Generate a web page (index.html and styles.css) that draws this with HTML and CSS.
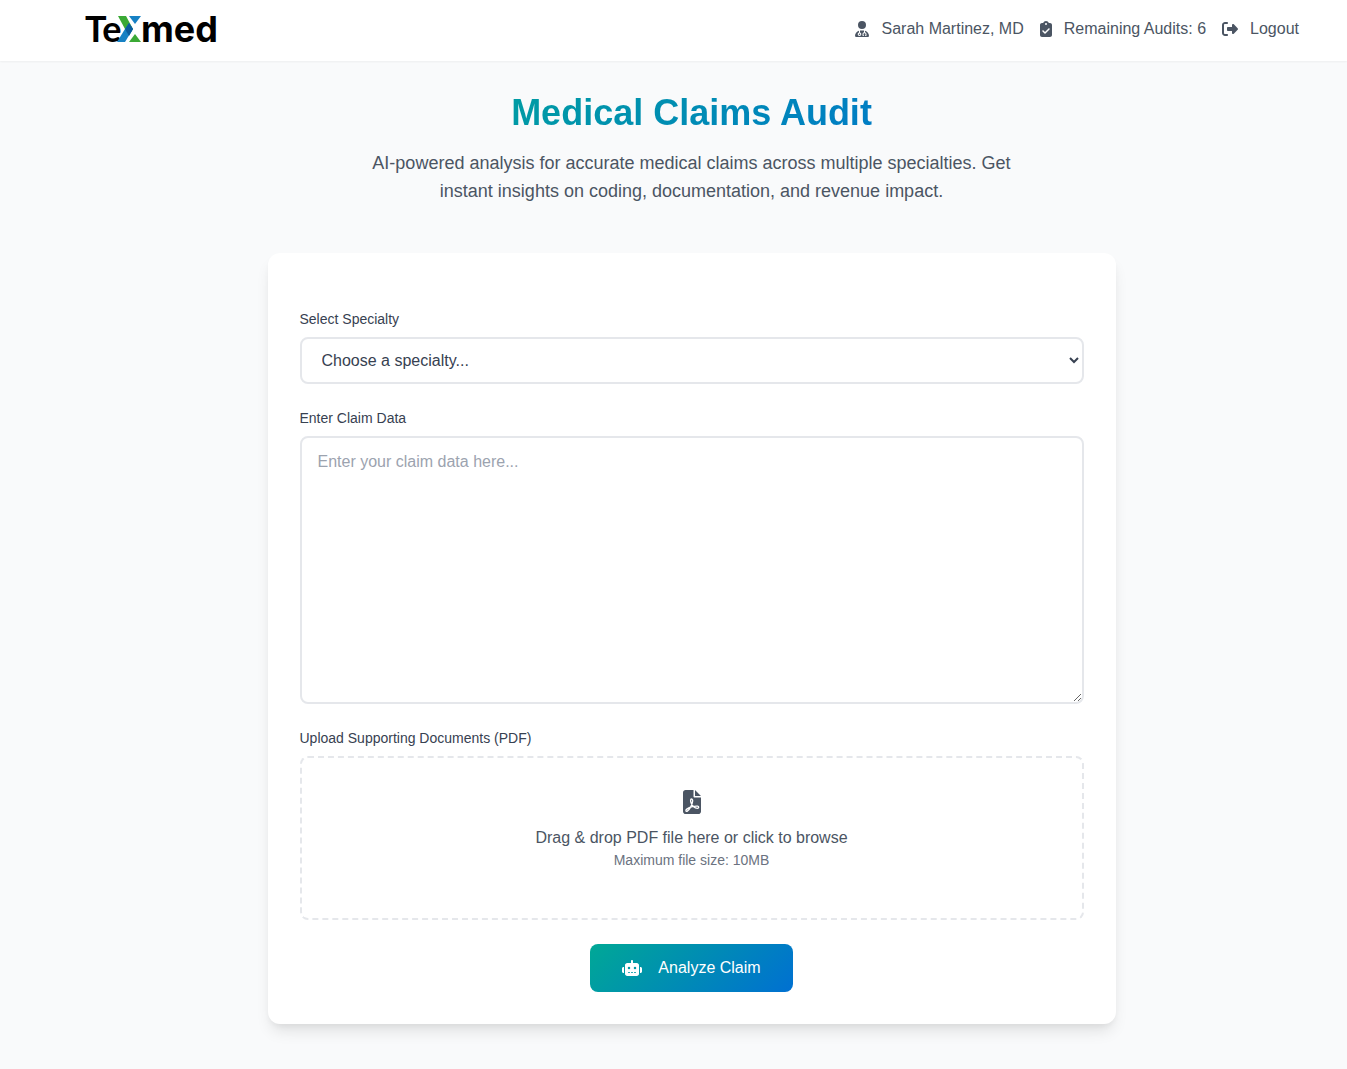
FILE: index.html
```html
<!doctype html>
<html lang="en">
<head>
    <meta charset="utf-8">
    <meta name="viewport" content="width=device-width, initial-scale=1">
    <title>Texmed - Medical Claims Audit</title>
    <link rel="stylesheet" href="styles.css">
</head>
<body>
    <header class="navbar">
        <a class="logo" href="#" aria-label="Texmed">
            <svg width="144" height="46" viewBox="0 0 144 46">
                <text class="logo-text logo-text-narrow" x="0" y="35">Te</text>
                <path fill="#3aa935" d="M33 9h8l7 13-4 6-4-6z"/>
                <path fill="#1681c4" d="M32 35h8l8-13-4-6-4 6z"/>
                <path fill="#0b5c9c" d="M44 16l4 6-4 7-4-7z"/>
                <path fill="#1681c4" d="M44 9h12l-6 8z"/>
                <path fill="#3aa935" d="M44 35h12l-6-8z"/>
                <text class="logo-text" x="56" y="35">med</text>
            </svg>
        </a>
        <nav class="nav-links">
            <span class="nav-item">
                <svg class="icon" width="14" height="16" viewBox="0 0 448 512"><path d="M224 256a128 128 0 1 0 0-256 128 128 0 1 0 0 256zm-96 55.2C54 332.9 0 401.3 0 482.3C0 498.7 13.3 512 29.7 512H418.3c16.4 0 29.7-13.3 29.7-29.7c0-81-54-149.4-128-171.1V362c27.6 7.1 48 32.2 48 62v40c0 8.8-7.2 16-16 16H336c-8.8 0-16-7.2-16-16s7.2-16 16-16V424c0-17.7-14.3-32-32-32s-32 14.3-32 32v24c8.8 0 16 7.2 16 16s-7.2 16-16 16H256c-8.8 0-16-7.2-16-16V424c0-29.8 20.4-54.9 48-62V304.9c-6-.6-12.1-.9-18.3-.9H178.3c-6.2 0-12.3 .3-18.3 .9v65.4c23.1 6.9 40 28.3 40 53.7c0 30.9-25.1 56-56 56s-56-25.1-56-56c0-25.4 16.9-46.8 40-53.7V311.2zM144 448a24 24 0 1 0 0-48 24 24 0 1 0 0 48z"/></svg>
                Sarah Martinez, MD
            </span>
            <span class="nav-item">
                <svg class="icon" width="12" height="16" viewBox="0 0 384 512"><path d="M192 0c-41.8 0-77.4 26.7-90.5 64H64C28.7 64 0 92.7 0 128V448c0 35.3 28.7 64 64 64H320c35.3 0 64-28.7 64-64V128c0-35.3-28.7-64-64-64H282.5C269.4 26.7 233.8 0 192 0zm0 64a32 32 0 1 1 0 64 32 32 0 1 1 0-64zM305 273L177 401c-9.4 9.4-24.6 9.4-33.9 0L79 337c-9.4-9.4-9.4-24.6 0-33.9s24.6-9.4 33.9 0l47 47L271 239c9.4-9.4 24.6-9.4 33.9 0s9.4 24.6 0 33.9z"/></svg>
                Remaining Audits: 6
            </span>
            <a class="nav-item" href="#">
                <svg class="icon" width="16" height="16" viewBox="0 0 512 512"><path d="M377.9 105.9L500.7 228.7c7.2 7.2 11.3 17.1 11.3 27.3s-4.1 20.1-11.3 27.3L377.9 406.1c-6.4 6.4-15 9.9-24 9.9c-18.7 0-33.9-15.2-33.9-33.9l0-62.1-128 0c-17.7 0-32-14.3-32-32l0-64c0-17.7 14.3-32 32-32l128 0 0-62.1c0-18.7 15.2-33.9 33.9-33.9c9 0 17.6 3.6 24 9.9zM160 96L96 96c-17.7 0-32 14.3-32 32l0 256c0 17.7 14.3 32 32 32l64 0c17.7 0 32 14.3 32 32s-14.3 32-32 32l-64 0c-53 0-96-43-96-96L0 128C0 75 43 32 96 32l64 0c17.7 0 32 14.3 32 32s-14.3 32-32 32z"/></svg>
                Logout
            </a>
        </nav>
    </header>

    <main class="container">
        <div class="hero">
            <h1>Medical Claims Audit</h1>
            <p>AI-powered analysis for accurate medical claims across multiple specialties. Get instant insights on coding, documentation, and revenue impact.</p>
        </div>

        <form class="card">
            <div class="form-group">
                <label for="specialty">Select Specialty</label>
                <select id="specialty" name="specialty" class="form-control">
                    <option value="">Choose a specialty...</option>
                </select>
            </div>

            <div class="form-group">
                <label for="claim-data">Enter Claim Data</label>
                <textarea id="claim-data" name="claim" class="form-control" rows="10" placeholder="Enter your claim data here..."></textarea>
            </div>

            <div class="form-group">
                <label for="pdf-file">Upload Supporting Documents (PDF)</label>
                <label class="dropzone" for="pdf-file">
                    <svg class="icon" width="18" height="24" viewBox="0 0 384 512">
                        <path d="M224 0H56C25 0 0 25 0 56v400c0 31 25 56 56 56h272c31 0 56-25 56-56V160H248c-13 0-24-11-24-24zM256 0v128h128z"/>
                        <path class="icon-line" d="M180 192c-24 0-22 42-6 86 20 56 70 108 136 112 30 0 34-36 4-44-58-12-170 18-234 62-36 28-14 58 12 42 50-32 106-138 114-216 2-24-10-42-26-42z"/>
                    </svg>
                    <span class="dropzone-text">Drag &amp; drop PDF file here or click to browse</span>
                    <span class="dropzone-hint">Maximum file size: 10MB</span>
                </label>
                <input type="file" id="pdf-file" name="pdf" accept=".pdf" hidden>
            </div>

            <button type="submit" class="btn-analyze">
                <svg class="icon" width="20" height="16" viewBox="0 0 640 512"><path d="M320 0c17.7 0 32 14.3 32 32V96H472c39.8 0 72 32.2 72 72V440c0 39.8-32.2 72-72 72H168c-39.8 0-72-32.2-72-72V168c0-39.8 32.2-72 72-72H288V32c0-17.7 14.3-32 32-32zM208 384c-8.8 0-16 7.2-16 16s7.2 16 16 16h32c8.8 0 16-7.2 16-16s-7.2-16-16-16H208zm96 0c-8.8 0-16 7.2-16 16s7.2 16 16 16h32c8.8 0 16-7.2 16-16s-7.2-16-16-16H304zm96 0c-8.8 0-16 7.2-16 16s7.2 16 16 16h32c8.8 0 16-7.2 16-16s-7.2-16-16-16H400zM264 256a40 40 0 1 0-80 0 40 40 0 1 0 80 0zm152 40a40 40 0 1 0 0-80 40 40 0 1 0 0 80zM48 224H64V416H48c-26.5 0-48-21.5-48-48V272c0-26.5 21.5-48 48-48zm544 0c26.5 0 48 21.5 48 48v96c0 26.5-21.5 48-48 48H576V224h16z"/></svg>
                Analyze Claim
            </button>
        </form>
    </main>
</body>
</html>
```
FILE: styles.css
```css
* {
    box-sizing: border-box;
}
body {
    margin: 0;
    padding-left: 36px;
    background-color: #f9fafb;
    color: #374151;
    font-family: "Liberation Sans", Arial, sans-serif;
    font-size: 16px;
    line-height: 24px;
}
a {
    color: inherit;
    text-decoration: none;
}
.icon {
    fill: currentColor;
    flex-shrink: 0;
}
.icon-line {
    fill: none;
    stroke: #fff;
    stroke-width: 28px;
    stroke-linejoin: round;
}

/* top bar */
.navbar {
    display: flex;
    justify-content: space-between;
    align-items: center;
    margin-left: -36px;
    padding: 7px 48px 8px 85px;
    background-color: #fff;
    box-shadow: 0 1px 2px rgba(0, 0, 0, 0.05);
}
.logo svg {
    display: block;
}
.logo-text {
    font-family: Inter, sans-serif;
    font-size: 36px;
    font-weight: 700;
    fill: #000;
}
.logo-text-narrow {
    font-family: Lato, sans-serif;
}
.nav-links {
    display: flex;
    gap: 16px;
    padding-bottom: 2px;
    color: #4b5563;
}
.nav-item {
    display: flex;
    align-items: center;
    gap: 12px;
}

/* content */
.container {
    max-width: 896px;
    margin: 0 auto;
    padding: 32px 24px 45px;
}
.hero {
    max-width: 672px;
    margin: 0 auto 48px;
    text-align: center;
}
.hero h1 {
    margin: 0 0 16px;
    font-size: 36px;
    line-height: 40px;
    background: linear-gradient(135deg, #00a896, #0070d2);
    -webkit-background-clip: text;
    background-clip: text;
    color: transparent;
}
.hero p {
    margin: 0;
    color: #4b5563;
    font-size: 18px;
    line-height: 28px;
}
.card {
    display: flex;
    flex-direction: column;
    gap: 24px;
    padding: 56px 32px 32px;
    background-color: #fff;
    border-radius: 12px;
    box-shadow: 0 10px 15px -3px rgba(0, 0, 0, 0.1), 0 4px 6px -2px rgba(0, 0, 0, 0.05);
}
.form-group {
    display: flex;
    flex-direction: column;
    gap: 8px;
    font-size: 14px;
    line-height: 20px;
}
.form-control {
    width: 100%;
    padding: 12px 16px;
    border: 2px solid #e5e7eb;
    border-radius: 8px;
    background-color: #fff;
    color: #374151;
    font: 16px/24px "Liberation Sans", Arial, sans-serif;
}
textarea.form-control {
    display: block;
    resize: vertical;
}
.form-control::placeholder {
    color: #9ca3af;
}
.dropzone {
    display: flex;
    flex-direction: column;
    align-items: center;
    padding: 32px 32px 48px;
    border: 2px dashed #e5e7eb;
    border-radius: 8px;
    color: #4b5563;
    cursor: pointer;
}
.dropzone-text {
    margin-top: 12px;
    font-size: 16px;
    line-height: 24px;
}
.dropzone-hint {
    color: #6b7280;
}
.btn-analyze {
    display: flex;
    align-items: center;
    align-self: center;
    gap: 16px;
    padding: 12px 32px;
    border: 0;
    border-radius: 8px;
    background: linear-gradient(135deg, #00a896, #0070d2);
    color: #fff;
    font: 16px/24px "Liberation Sans", Arial, sans-serif;
    cursor: pointer;
}
```
